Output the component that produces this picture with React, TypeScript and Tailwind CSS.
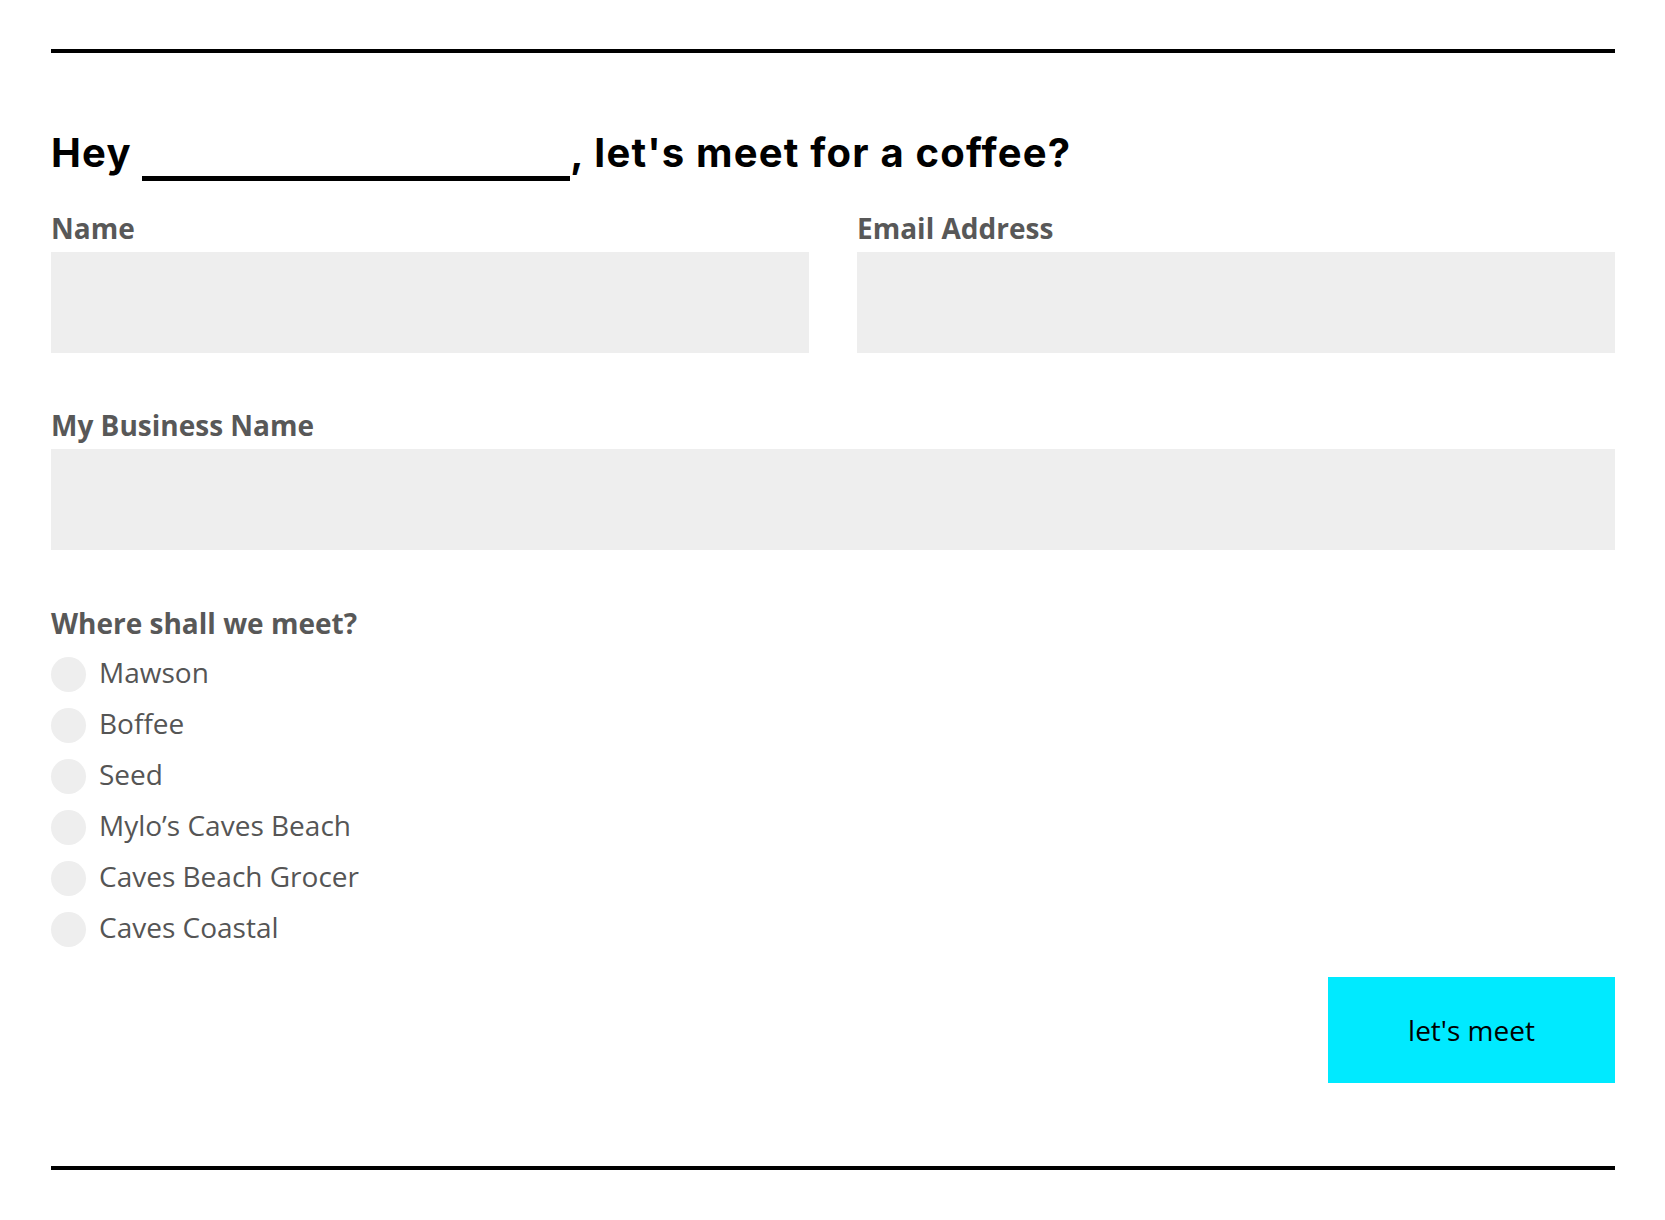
import React from 'react'

const places = ['Mawson', 'Boffee', 'Seed', 'Mylo’s Caves Beach', 'Caves Beach Grocer', 'Caves Coastal']

const labelCls = "block font-['Open_Sans',sans-serif] font-bold text-[28px] leading-[32px] text-[#585858]"

const Field = ({ label, className }: { label: string; className?: string }) => (
  <div className={className}>
    <label className={labelCls}>{label}</label>
    <div className="mt-[8px] h-[101px] bg-[#eeeeee]" />
  </div>
)

export default function App() {
  return (
    <div className="min-h-[1220px] bg-white pl-[51px] pr-[50px] pt-[49px]">
      <div className="h-[4px] bg-black" />

      <h1 className="mt-[76px] font-['Inter',sans-serif] font-bold text-[40px] leading-[48px] tracking-[1.2px] text-black">
        Hey{' '}
        <span className="inline-block w-[428px] h-[14px] border-b-[5px] border-black align-[-14px]" />
        , let's meet for a coffee?
      </h1>

      <div className="mt-[31px] grid grid-cols-2 gap-x-[48px]">
        <Field label="Name" />
        <Field label="Email Address" />
      </div>

      <Field label="My Business Name" className="mt-[56px]" />

      <div className="mt-[57px]">
        <div className={labelCls}>Where shall we meet?</div>
        <div className="mt-[10px] flex flex-col">
          {places.map(p => (
            <label key={p} className="flex h-[51px] items-center gap-[13px]">
              <span className="h-[35px] w-[35px] shrink-0 rounded-full bg-[#eeeeee]" />
              <span className="-mt-[5px] font-['Open_Sans',sans-serif] text-[28px] text-[#555555]">{p}</span>
            </label>
          ))}
        </div>
      </div>

      <div className="mt-[22px] flex justify-end">
        <button className="h-[106px] w-[287px] bg-[#00eaff] font-['Open_Sans',sans-serif] text-[28px] text-black">
          let's meet
        </button>
      </div>

      <div className="mt-[83px] h-[4px] bg-black" />
    </div>
  )
}
